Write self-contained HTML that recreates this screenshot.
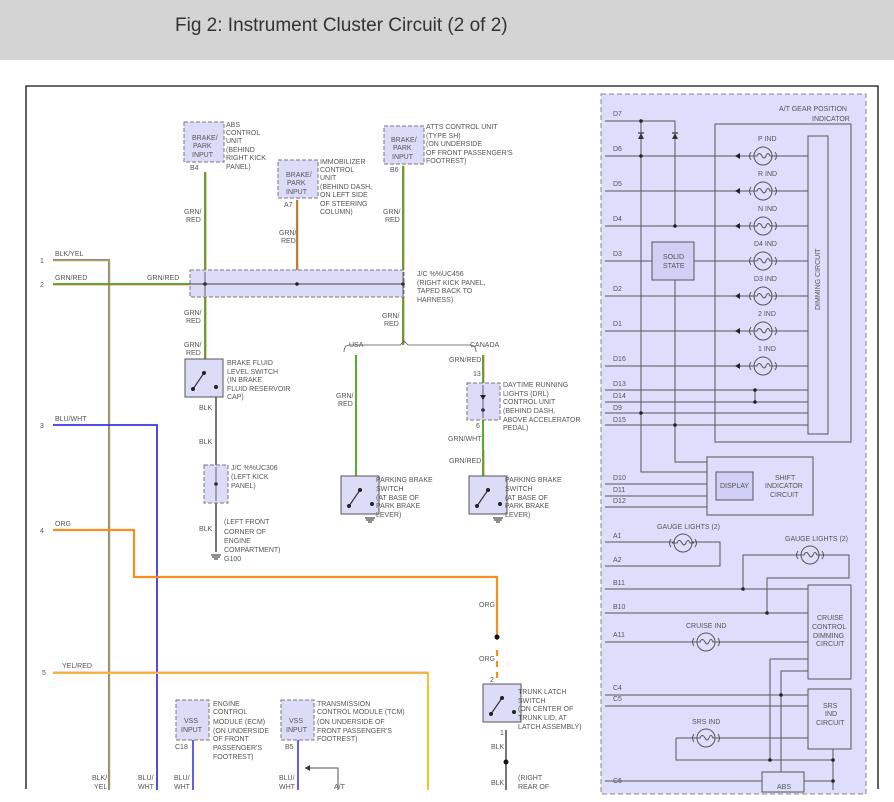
<!DOCTYPE html>
<html><head><meta charset="utf-8"><style>
html,body{margin:0;padding:0;background:#fff;}
svg{display:block;}
text{font-family:"Liberation Sans",sans-serif;font-size:7px;fill:#555;}
.h{font-size:19px;fill:#333;}
</style></head><body>
<svg width="894" height="802" viewBox="0 0 894 802" xmlns="http://www.w3.org/2000/svg">
<defs>
<g id="bulb"><circle r="9" fill="none" stroke="#555" stroke-width="1"/><path d="M-12,-4 Q-15,0 -12,4 M12,-4 Q15,0 12,4 M-11,0 H-6 Q-4,-5 -1,0 Q1,4 3,0 Q5,-5 7,0 H11" fill="none" stroke="#555" stroke-width="1"/></g>
<g id="dio"><path d="M-3,-3 V3 L3,0 Z" fill="#333" transform="rotate(180)"/><path d="M-3,-3 V3" stroke="#333" stroke-width="1.2"/></g>
<g id="sw"><rect x="0" y="0" width="38" height="38" fill="#dcdcf8" stroke="#555"/><path d="M19,14 L8,30" stroke="#333" stroke-width="1.2"/><circle cx="19" cy="14" r="2" fill="#222"/><circle cx="8" cy="30" r="2" fill="#222"/><circle cx="31" cy="28" r="2" fill="#222"/></g>
</defs>
<rect x="0" y="0" width="894" height="60" fill="#d4d4d4"/>
<text x="175" y="31" class="h">Fig 2: Instrument Cluster Circuit (2 of 2)</text>
<path d="M26,789 V86 H878 V789" fill="none" stroke="#111" stroke-width="1.3"/>

<!-- right panel -->
<rect x="601" y="94" width="265" height="700" fill="#dedefc" stroke="#888" stroke-dasharray="5,3"/>
<rect x="715" y="124" width="136" height="318" fill="none" stroke="#555"/>
<rect x="808" y="136" width="20" height="298" fill="#dedefc" stroke="#555"/>
<text transform="translate(820,310) rotate(-90)">DIMMING CIRCUIT</text>
<text x="779" y="111">A/T GEAR POSITION</text><text x="812" y="121">INDICATOR</text>
<g stroke="#555" stroke-width="1" fill="none">
<path d="M605,121 H675 V226 M641,121 V472 H707 M675,280 V462 H707"/>
<path d="M605,156 H808 M605,191 H808 M605,226 H808 M605,261 H652 M694,261 H808 M605,296 H808 M605,331 H808 M605,366 H808 M605,390 H808 M605,402 H808 M605,413 H808 M605,425 H808 M755,390 V402"/>
<path d="M605,484 H707 M605,496 H707 M605,507 H707"/>
<path d="M605,542 H720 V566 H605 M605,589 H808 M605,613 H808 M605,642 H808 M743,589 V555 H849 V578 H767 V613 M770,760 V659 H808 M781,772 V671 H808 M605,695 H808 M605,706 H808 M676,738 H808 M676,738 V760 H833 V749 M833,760 V790 M804,781 H833 M605,781 H762"/>
</g>
<g fill="#222"><circle cx="641" cy="121" r="1.8"/><circle cx="641" cy="156" r="1.8"/><circle cx="675" cy="226" r="1.8"/><circle cx="755" cy="390" r="1.8"/><circle cx="755" cy="402" r="1.8"/><circle cx="641" cy="413" r="1.8"/><circle cx="675" cy="425" r="1.8"/><circle cx="743" cy="589" r="1.8"/><circle cx="767" cy="613" r="1.8"/><circle cx="781" cy="695" r="1.8"/><circle cx="770" cy="760" r="1.8"/><circle cx="833" cy="760" r="1.8"/><circle cx="833" cy="781" r="1.8"/></g>
<use href="#dio" x="641" y="136" transform="rotate(90 641 136)"/><use href="#dio" x="675" y="136" transform="rotate(90 675 136)"/>
<g fill="#222">
<path d="M734,153 V159 L739,156 Z" transform="rotate(180 737 156)"/><path d="M734,188 V194 L739,191 Z" transform="rotate(180 737 191)"/><path d="M734,223 V229 L739,226 Z" transform="rotate(180 737 226)"/><path d="M734,293 V299 L739,296 Z" transform="rotate(180 737 296)"/><path d="M734,328 V334 L739,331 Z" transform="rotate(180 737 331)"/><path d="M734,363 V369 L739,366 Z" transform="rotate(180 737 366)"/>
</g>
<g fill="#dedefc">
<circle cx="763" cy="156" r="9"/><circle cx="763" cy="191" r="9"/><circle cx="763" cy="226" r="9"/><circle cx="763" cy="261" r="9"/><circle cx="763" cy="296" r="9"/><circle cx="763" cy="331" r="9"/><circle cx="763" cy="366" r="9"/><circle cx="683" cy="543" r="9"/><circle cx="810" cy="555" r="9"/><circle cx="706" cy="642" r="9"/><circle cx="706" cy="738" r="9"/>
</g>
<use href="#bulb" x="763" y="156"/><use href="#bulb" x="763" y="191"/><use href="#bulb" x="763" y="226"/><use href="#bulb" x="763" y="261"/><use href="#bulb" x="763" y="296"/><use href="#bulb" x="763" y="331"/><use href="#bulb" x="763" y="366"/>
<use href="#bulb" x="683" y="543"/><use href="#bulb" x="810" y="555"/><use href="#bulb" x="706" y="642"/><use href="#bulb" x="706" y="738"/>
<text x="758" y="141">P IND</text><text x="758" y="176">R IND</text><text x="758" y="211">N IND</text><text x="754" y="246">D4 IND</text><text x="754" y="281">D3 IND</text><text x="758" y="316">2 IND</text><text x="758" y="351">1 IND</text>
<text x="613" y="116">D7</text><text x="613" y="151">D6</text><text x="613" y="186">D5</text><text x="613" y="221">D4</text><text x="613" y="256">D3</text><text x="613" y="291">D2</text><text x="613" y="326">D1</text><text x="613" y="361">D16</text><text x="613" y="386">D13</text><text x="613" y="398">D14</text><text x="613" y="410">D9</text><text x="613" y="422">D15</text>
<rect x="652" y="242" width="42" height="38" fill="#d0d0f6" stroke="#555"/><text x="663" y="259">SOLID</text><text x="663" y="268">STATE</text>
<rect x="707" y="457" width="106" height="58" fill="#dedefc" stroke="#555"/><rect x="716" y="472" width="37" height="28" fill="#d0d0f6" stroke="#555"/><text x="720" y="488">DISPLAY</text>
<text x="775" y="480">SHIFT</text><text x="765" y="488">INDICATOR</text><text x="770" y="497">CIRCUIT</text>
<text x="613" y="480">D10</text><text x="613" y="492">D11</text><text x="613" y="503">D12</text>
<text x="657" y="529">GAUGE LIGHTS (2)</text><text x="785" y="541">GAUGE LIGHTS (2)</text>
<text x="613" y="538">A1</text><text x="613" y="562">A2</text><text x="613" y="585">B11</text><text x="613" y="609">B10</text><text x="613" y="637">A11</text>
<rect x="808" y="585" width="43" height="94" fill="#dedefc" stroke="#555"/><text x="817" y="620">CRUISE</text><text x="812" y="629">CONTROL</text><text x="813" y="638">DIMMING</text><text x="816" y="646">CIRCUIT</text>
<text x="686" y="628">CRUISE IND</text>
<text x="613" y="690">C4</text><text x="613" y="701">C5</text>
<rect x="808" y="689" width="43" height="60" fill="#dedefc" stroke="#555"/><text x="823" y="708">SRS</text><text x="825" y="716">IND</text><text x="816" y="725">CIRCUIT</text>
<text x="692" y="724">SRS IND</text>
<text x="613" y="783">C6</text>
<rect x="762" y="772" width="42" height="20" fill="#dedefc" stroke="#555"/><text x="777" y="789">ABS</text>

<!-- left wires -->
<g fill="none">
<path d="M53,260 H109 V790" stroke="#8a8a8a" stroke-width="2"/><path d="M53,261 H110 V790" stroke="#d8c84a" stroke-width="0.7"/>
<path d="M53,284 H190" stroke="#55b030" stroke-width="2"/><path d="M53,285 H190" stroke="#e04020" stroke-width="0.6"/>
<path d="M53,425 H157 V790" stroke="#3838e8" stroke-width="1.8"/>
<path d="M53,530 H134 V577 H497 V640" stroke="#f59020" stroke-width="2.2"/>
<path d="M497,650 V680" stroke="#f59020" stroke-width="2.2" stroke-dasharray="6,5"/>
<path d="M53,673 H428 V790" stroke="#f8c030" stroke-width="2"/><path d="M53,672 H428" stroke="#f08080" stroke-width="0.7"/>
<path d="M205,172 V270 M205,297 V359 M403,166 V270 M403,297 V345 M356,355 V477 M483,355 V383 M483,420 V476" stroke="#55b030" stroke-width="2"/>
<path d="M206,172 V270 M206,297 V359 M404,166 V270 M404,297 V345 M484,355 V383 M484,450 V476" stroke="#e04020" stroke-width="0.6"/>
<path d="M297,200 V270" stroke="#e07030" stroke-width="2"/><path d="M298,200 V270" stroke="#55b030" stroke-width="0.6"/>
<path d="M216,391 V465 M216,503 V552 M506,730 V790" stroke="#777" stroke-width="2"/>
<path d="M193,740 V790 M298,740 V790" stroke="#3838e8" stroke-width="1.6"/>
<path d="M305,768 H338 V790" stroke="#555" stroke-width="1"/>
<path d="M344,352 Q344,345 350,345 H400 L404,341 L408,345 H470 Q476,345 476,352" stroke="#555" stroke-width="0.8"/>
</g>
<path d="M305,768 l5,-3 v6z" fill="#333"/>
<circle cx="497" cy="637" r="2.5" fill="#111"/><circle cx="506" cy="762" r="2.5" fill="#111"/>
<text x="40" y="263">1</text><text x="55" y="256">BLK/YEL</text>
<text x="40" y="287">2</text><text x="55" y="280">GRN/RED</text><text x="147" y="280">GRN/RED</text>
<text x="40" y="428">3</text><text x="55" y="421">BLU/WHT</text>
<text x="40" y="533">4</text><text x="55" y="526">ORG</text>
<text x="42" y="675">5</text><text x="62" y="668">YEL/RED</text>

<!-- top modules -->
<g fill="#dcdcf8" stroke="#777" stroke-dasharray="4,2">
<rect x="184" y="122" width="40" height="40"/><rect x="278" y="160" width="40" height="38"/><rect x="384" y="126" width="40" height="38"/>
<rect x="190" y="270" width="214" height="27"/><rect x="204" y="465" width="24" height="38"/><rect x="467" y="383" width="33" height="37"/>
<rect x="176" y="700" width="33" height="40"/><rect x="281" y="700" width="33" height="40"/>
</g>
<path d="M190,284 H404" stroke="#444" stroke-width="1"/>
<g fill="#222"><circle cx="205" cy="284" r="1.8"/><circle cx="297" cy="284" r="1.8"/><circle cx="403" cy="284" r="1.8"/><circle cx="216" cy="484" r="1.8"/><circle cx="483" cy="410" r="1.8"/></g>
<path d="M205,272 V296 M403,272 V296 M216,467 V501 M483,385 V418" stroke="#444" stroke-width="0.8"/>
<path d="M480,395 h6 l-3,5z" fill="#222"/>
<text x="192" y="140">BRAKE/</text><text x="193" y="148">PARK</text><text x="192" y="157">INPUT</text>
<text x="226" y="127">ABS</text><text x="226" y="135">CONTROL</text><text x="226" y="143">UNIT</text><text x="226" y="152">(BEHIND</text><text x="226" y="160">RIGHT KICK</text><text x="226" y="169">PANEL)</text><text x="190" y="170">B4</text>
<text x="286" y="177">BRAKE/</text><text x="287" y="185">PARK</text><text x="286" y="194">INPUT</text><text x="284" y="207">A7</text>
<text x="320" y="164">IMMOBILIZER</text><text x="320" y="172">CONTROL</text><text x="320" y="180">UNIT</text><text x="320" y="189">(BEHIND DASH,</text><text x="320" y="197">ON LEFT SIDE</text><text x="320" y="206">OF STEERING</text><text x="320" y="214">COLUMN)</text>
<text x="391" y="142">BRAKE/</text><text x="393" y="150">PARK</text><text x="392" y="159">INPUT</text><text x="390" y="172">B6</text>
<text x="426" y="129">ATTS CONTROL UNIT</text><text x="426" y="138">(TYPE SH)</text><text x="426" y="146">(ON UNDERSIDE</text><text x="426" y="155">OF FRONT PASSENGER'S</text><text x="426" y="163">FOOTREST)</text>
<text x="184" y="214">GRN/</text><text x="186" y="222">RED</text><text x="279" y="235">GRN/</text><text x="281" y="243">RED</text><text x="383" y="214">GRN/</text><text x="385" y="222">RED</text>
<text x="417" y="276">J/C %%UC456</text><text x="417" y="285">(RIGHT KICK PANEL,</text><text x="417" y="293">TAPED BACK TO</text><text x="417" y="302">HARNESS)</text>
<text x="184" y="315">GRN/</text><text x="186" y="323">RED</text><text x="184" y="347">GRN/</text><text x="186" y="355">RED</text><text x="382" y="318">GRN/</text><text x="384" y="326">RED</text>
<text x="349" y="347">USA</text><text x="470" y="347">CANADA</text>
<use href="#sw" x="185" y="359"/>
<text x="227" y="365">BRAKE FLUID</text><text x="227" y="374">LEVEL SWITCH</text><text x="227" y="382">(IN BRAKE</text><text x="227" y="391">FLUID RESERVOIR</text><text x="227" y="399">CAP)</text>
<text x="199" y="410">BLK</text><text x="199" y="444">BLK</text>
<text x="231" y="470">J/C %%UC306</text><text x="231" y="479">(LEFT KICK</text><text x="231" y="488">PANEL)</text>
<text x="199" y="531">BLK</text><text x="224" y="524">(LEFT FRONT</text><text x="224" y="534">CORNER OF</text><text x="224" y="543">ENGINE</text><text x="224" y="552">COMPARTMENT)</text><text x="224" y="561">G100</text>
<path d="M211,555 h10 M212,557 h8 M214,559 h4" stroke="#222"/>
<text x="336" y="398">GRN/</text><text x="338" y="406">RED</text>
<text x="449" y="362">GRN/RED</text><text x="473" y="376">13</text><text x="476" y="428">6</text>
<text x="503" y="387">DAYTIME RUNNING</text><text x="503" y="396">LIGHTS (DRL)</text><text x="503" y="404">CONTROL UNIT</text><text x="503" y="413">(BEHIND DASH,</text><text x="503" y="422">ABOVE ACCELERATOR</text><text x="503" y="430">PEDAL)</text>
<text x="448" y="441">GRN/WHT</text><text x="449" y="463">GRN/RED</text>
<use href="#sw" x="341" y="476"/><use href="#sw" x="469" y="476"/>
<text x="376" y="482">PARKING BRAKE</text><text x="376" y="491">SWITCH</text><text x="376" y="500">(AT BASE OF</text><text x="376" y="508">PARK BRAKE</text><text x="376" y="517">LEVER)</text>
<text x="505" y="482">PARKING BRAKE</text><text x="505" y="491">SWITCH</text><text x="505" y="500">(AT BASE OF</text><text x="505" y="508">PARK BRAKE</text><text x="505" y="517">LEVER)</text>
<path d="M365,518 h10 M366,520 h8 M368,522 h4 M493,518 h10 M494,520 h8 M496,522 h4" stroke="#222"/>
<text x="479" y="607">ORG</text><text x="479" y="661">ORG</text><text x="490" y="682">2</text>
<use href="#sw" x="483" y="684"/>
<text x="518" y="694">TRUNK LATCH</text><text x="518" y="703">SWITCH</text><text x="518" y="711">(ON CENTER OF</text><text x="518" y="720">TRUNK LID, AT</text><text x="518" y="729">LATCH ASSEMBLY)</text>
<text x="500" y="735">1</text><text x="491" y="749">BLK</text><text x="491" y="785">BLK</text><text x="518" y="780">(RIGHT</text><text x="518" y="789">REAR OF</text>
<text x="184" y="723">VSS</text><text x="181" y="732">INPUT</text><text x="175" y="749">C18</text>
<text x="213" y="706">ENGINE</text><text x="213" y="714">CONTROL</text><text x="213" y="724">MODULE (ECM)</text><text x="213" y="733">(ON UNDERSIDE</text><text x="213" y="741">OF FRONT</text><text x="213" y="750">PASSENGER'S</text><text x="213" y="759">FOOTREST)</text>
<text x="289" y="723">VSS</text><text x="286" y="732">INPUT</text><text x="285" y="749">B5</text>
<text x="317" y="706">TRANSMISSION</text><text x="317" y="714">CONTROL MODULE (TCM)</text><text x="317" y="724">(ON UNDERSIDE OF</text><text x="317" y="733">FRONT PASSENGER'S</text><text x="317" y="741">FOOTREST)</text>
<text x="92" y="780">BLK/</text><text x="94" y="789">YEL</text><text x="138" y="780">BLU/</text><text x="138" y="789">WHT</text><text x="174" y="780">BLU/</text><text x="174" y="789">WHT</text><text x="279" y="780">BLU/</text><text x="279" y="789">WHT</text><text x="334" y="789">A/T</text>
</svg>
</body></html>
